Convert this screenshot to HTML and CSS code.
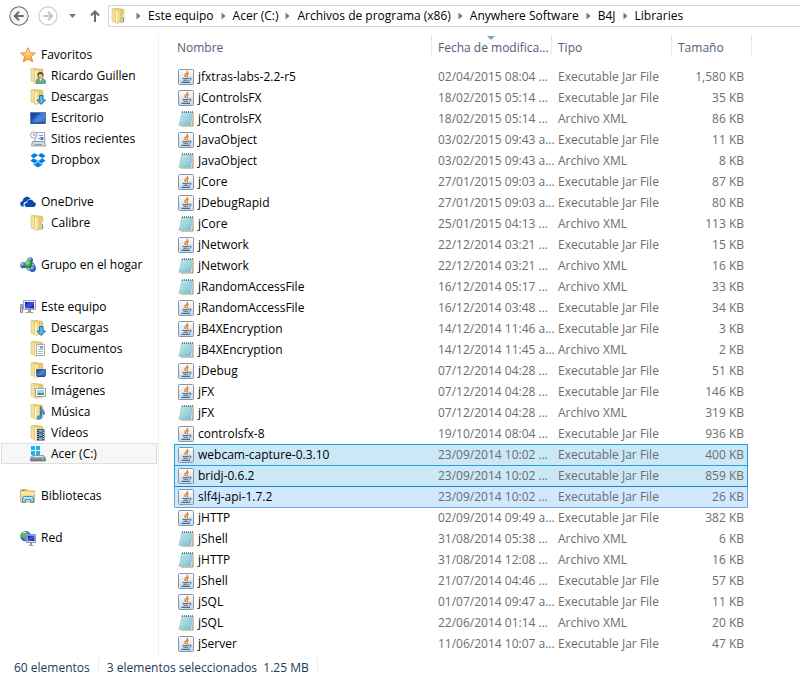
FILE: index.html
```html
<!DOCTYPE html>
<html lang="es">
<head>
<meta charset="utf-8">
<title>Libraries</title>
<link rel="stylesheet" href="styles.css">
</head>
<body>
<svg class="sprite" width="0" height="0" aria-hidden="true">
  <defs>
    <linearGradient id="g-folder" x1="0" x2="1" y1="0" y2="0"><stop offset="0" stop-color="#faefc0"/><stop offset="1" stop-color="#ecd27c"/></linearGradient>
    <linearGradient id="g-star" x1="0" x2="0" y1="0" y2="1"><stop offset="0" stop-color="#fff3a0"/><stop offset="1" stop-color="#ff9a2e"/></linearGradient>
    <linearGradient id="g-screen" x1="0" x2="1" y1="0" y2="1"><stop offset="0" stop-color="#123f98"/><stop offset=".6" stop-color="#4a8ae0"/><stop offset="1" stop-color="#2560b8"/></linearGradient>
    <linearGradient id="g-monitor" x1="0" x2="1" y1="0" y2="1"><stop offset="0" stop-color="#0716a8"/><stop offset=".5" stop-color="#4058e8"/><stop offset="1" stop-color="#0618a0"/></linearGradient>
    <linearGradient id="g-jar" x1="0" x2="0" y1="0" y2="1"><stop offset="0" stop-color="#fdfdfe"/><stop offset="1" stop-color="#cbd6e1"/></linearGradient>
    <linearGradient id="g-note" x1="0" x2="1" y1="0" y2="1"><stop offset="0" stop-color="#c9edf1"/><stop offset="1" stop-color="#76b9ca"/></linearGradient>
    <radialGradient id="g-blue" cx=".35" cy=".3"><stop offset="0" stop-color="#b9d4ff"/><stop offset="1" stop-color="#3358b0"/></radialGradient>
    <radialGradient id="g-green" cx=".35" cy=".3"><stop offset="0" stop-color="#a6f090"/><stop offset="1" stop-color="#249030"/></radialGradient>
    <linearGradient id="g-drive" x1="0" x2="0" y1="0" y2="1"><stop offset="0" stop-color="#c3cbd0"/><stop offset="1" stop-color="#5d6a74"/></linearGradient>
  </defs>
  <symbol id="folder" viewBox="0 0 16 16">
    <path d="M1 1 2 .3h5.500L8 1h4l1 1v11.500l-1 1H5L1 13z" fill="#e6ca74" stroke="#d3b45a" stroke-width=".5"/>
    <path d="M1.300 1.300H4V14l-2.700-1.200z" fill="#f3e09c"/>
    <path d="M4.500 2.500 9.500 1v13L6 15.700l-1.500-1z" fill="url(#g-folder)" stroke="#d9bb62" stroke-width=".5"/>
    <path d="M5.500 3.200v11" stroke="#fffbe6" stroke-width=".8"/>
  </symbol>
  <symbol id="folder-plain" viewBox="0 0 16 16">
    <use href="#folder"/><path d="M12.500 9v5" stroke="#5aa9dc"/><path d="M12.500 6v3" stroke="#f5fbff"/>
  </symbol>
  <symbol id="star" viewBox="0 0 16 16">
    <path d="m8 .7 2.100 5 5.300.4-4.100 3.400 1.400 5.400L8 12l-4.700 2.900 1.300-5.400L.6 6.100l5.300-.4z" fill="url(#g-star)" stroke="#e8933e"/>
  </symbol>
  <symbol id="user" viewBox="0 0 16 16">
    <use href="#folder"/><path d="M6 15.500V13q0-2.500 4.500-2.500T15.500 13v2.500z" fill="#5fb287" stroke="#3e8262" stroke-width=".6"/>
    <circle cx="10.500" cy="7" r="3.100" fill="#5d4a38"/><path d="M8.300 7q2.300-2 4.500 0 0 3.500-2.200 3.800Q8.500 10 8.300 7z" fill="#eebd8d"/><path d="m9.500 11 1.100 2 1.300-2z" fill="#fff"/>
  </symbol>
  <symbol id="download" viewBox="0 0 16 16">
    <use href="#folder"/><path d="M9.500 6.500h3.500V11h2.500l-4.200 4.500L7 11h2.500z" fill="#4cb8ee" stroke="#1e6dae"/>
  </symbol>
  <symbol id="desktop" viewBox="0 0 16 16">
    <path d="M.5 2.500h15v11H.5z" fill="url(#g-screen)" stroke="#5d7fae"/><path d="M1 13h14" stroke="#16396f"/><path d="M1 3v9l9-9z" fill="#0a3a94" opacity=".5"/>
  </symbol>
  <symbol id="recent" viewBox="0 0 16 16">
    <path d="M5.500 1.500h9l.5 9H5z" fill="#f7f9fb" stroke="#98a4af"/><path d="M9 4.500h4M8 7.500h2.500" stroke="#8a9aaa"/><path d="M10.500 6h3v3h-3z" fill="#2f86dd"/>
    <path d="M2.500 10.500h12l1 4.500h-14z" fill="#d5dade" stroke="#929da7"/><path d="M5 13.500h7" stroke="#8a959e"/>
    <circle cx="3.700" cy="4" r="3.200" fill="#fff" stroke="#9aa5ae"/><path d="M3.700 2v2.300h1.800" fill="none" stroke="#66717b" stroke-width=".8"/>
  </symbol>
  <symbol id="dropbox" viewBox="0 0 16 16">
    <path d="M4.700 1 .5 3.800l3 2.400L8 3.600zm6.600 0 4.200 2.800-3 2.400L8 3.600zM.5 8.700l4.200 2.800L8 8.900 3.500 6.200zm15 0-4.200 2.800L8 8.900l4.500-2.700zM4.700 12.400 8 9.700l3.300 2.700 1.200-.8v1.200L8 15.500l-4.500-2.700v-1.200z" fill="#007ee5"/>
  </symbol>
  <symbol id="onedrive" viewBox="0 0 16 16">
    <path d="M2 12.500q-2-1-1.800-3Q.6 7.400 2.600 7q.2-3 2.900-3.900 3.300-1 5.100 1.600-2.600.2-3.800 2.800-3.300.3-3.300 3.200 0 1 .6 1.800z" fill="#094ab2"/>
    <path d="M6.500 13q-2-.4-2-2.200 0-2 2.600-2.300.6-3 3.400-3 2.400 0 3.200 2.500 2.300.3 2.200 2.600-.1 2-2 2.400z" fill="#094ab2"/>
  </symbol>
  <symbol id="homegroup" viewBox="0 0 16 16">
    <circle cx="10" cy="3.200" r="3" fill="url(#g-blue)"/><circle cx="3" cy="8" r="2.900" fill="url(#g-blue)"/><circle cx="12.500" cy="11.500" r="3.400" fill="url(#g-blue)"/><circle cx="8.500" cy="7.300" r="4" fill="url(#g-green)"/><path d="M2 11q4-2 7 3M11 6q3-1 4 3" fill="none" stroke="#3359a8"/>
  </symbol>
  <symbol id="pc" viewBox="0 0 16 16">
    <path d="M.5 5.500h2v8h-2z" fill="#cfd3d8" stroke="#858d96"/><path d="M1 8.500h1" stroke="#3fb64a"/>
    <path d="M3.500 1.500h12v9h-12z" fill="#e6e8eb" stroke="#a1a7ae"/><path d="M5 3h9v6.500H5z" fill="url(#g-monitor)"/><path d="M8 11h3v2H8z" fill="#8e959d"/><path d="M5.500 13.500h8" stroke="#9ba2a9"/>
  </symbol>
  <symbol id="documents" viewBox="0 0 16 16">
    <use href="#folder"/><path d="M6.500 3.500h8v11h-8z" fill="#fff" stroke="#a4acb4"/><path d="M8 5.500h1.500M8 8.500h5M8 10.500h5M8 12.500h5" stroke="#a8b8c8"/><path d="M10 5h3v2.500h-3z" fill="#5aa3dc"/>
  </symbol>
  <symbol id="folder-desktop" viewBox="0 0 16 16">
    <use href="#folder"/><path d="M6.500 7.500h9v6h-9z" fill="url(#g-screen)" stroke="#4a5f86"/><path d="M7 14.500h8" stroke="#2c4470"/>
  </symbol>
  <symbol id="pictures" viewBox="0 0 16 16">
    <use href="#folder"/><path d="M5.500 5.500h10v8h-10z" fill="#fff" stroke="#9aa4ad"/><path d="M7 7h7v5H7z" fill="#9bd0f0"/><path d="m7 12 2-2.500 2 1 3-1V12z" fill="#4e8a78"/>
  </symbol>
  <symbol id="music" viewBox="0 0 16 16">
    <use href="#folder"/><path d="M10.500 2.500q.5 2 2.500 3.500 2.500 2 .8 5 0-2.500-2.300-3.500v5.500q-.2 2.300-2.500 2.300-2 0-2-1.600 0-1.900 3.500-2z" fill="#46a6e6" stroke="#1c68b0" stroke-width=".8"/>
  </symbol>
  <symbol id="videos" viewBox="0 0 16 16">
    <use href="#folder"/><path d="M7 4h7.500v11.500H7z" fill="#343a42"/><path d="M9 4.500h3.500v3H9zm0 4h3.500v2.500H9zm0 3.500h3.500v3H9z" fill="#65aee0"/><path d="M8 5v10M13.500 5v10" stroke="#e5e9ed" stroke-dasharray="1 1"/>
  </symbol>
  <symbol id="drive" viewBox="0 0 16 16">
    <path d="M1 0h4v4H1zm5 0h4v4H6zM1 5h4v4H1zm5 0h4v4H6z" fill="#16b8f0"/><path d="M2.500 9.500h11L15.500 12v3H.5v-3z" fill="url(#g-drive)" stroke="#707c85" stroke-width=".7"/><path d="M3 10.500h10" stroke="#e0e5e8"/><path d="M12 13.500h2" stroke="#49e04d"/>
  </symbol>
  <symbol id="libraries" viewBox="0 0 16 16">
    <path d="M.5 2.500 2 1.500h5l1 1.500h6.500v11H.5z" fill="#f3dd8d" stroke="#d6b85e"/><path d="M1.500 2.500h4" stroke="#63b75d"/><path d="M1 5.500h14" stroke="#fff5c9"/>
    <path d="M2.500 14.500v-4q0-2 2-2h7q2 0 2 2v4h-3v-3h-5v3z" fill="#8fd0ef" stroke="#3d94c7"/><path d="M4 10h8" stroke="#e3f7ff"/>
  </symbol>
  <symbol id="network" viewBox="0 0 16 16">
    <circle cx="5.500" cy="6" r="5.300" fill="url(#g-blue)"/><path d="M2 3q3-3 5-1L5 5 2 7.500.5 6zm2 4 3 1-2 3z" fill="#53c14b"/><path d="M3 2.500h3" stroke="#d9ffd3"/>
    <path d="M6.500 4.500h9v8h-9z" fill="#dfe3e8" stroke="#8e98a5"/><path d="M7.500 5.500h7V11h-7z" fill="url(#g-monitor)"/><path d="M10 13h2v2h-2z" fill="#89929b"/><path d="M8.500 15.500h5" stroke="#9fa7af"/>
  </symbol>
  <symbol id="jar" viewBox="0 0 16 16">
    <rect x=".5" y=".5" width="15" height="15" rx="1" fill="url(#g-jar)" stroke="#8197ad"/>
    <path d="M9.300 2q.8 1.500-1.300 2.700Q5.800 6 7.800 8M10.700 4.500Q8.200 5.500 9.200 6.700q.6.900-.5 1.500" fill="none" stroke="#ea8124" stroke-width="1.300"/>
    <path d="M4.500 9.300q3 .8 6.500 0M5.200 11.300h5M3.500 13.400h8.500" fill="none" stroke="#45698c" stroke-width="1.100"/><path d="M11.300 9q2.800-.2 1.500 1.500-.8.800-1.700.9" fill="none" stroke="#45698c"/>
  </symbol>
  <symbol id="note" viewBox="0 0 16 16">
    <path d="M13.500 1.500H15.500v14H3v-1.200h10z" fill="#a38e66"/><path d="M4 1.500h10.700l-.4 13H3z" fill="#f5f6f3"/><path d="M3.500 1.500h10.700L12.800 14.300H.7Q2.700 10 3.500 1.500z" fill="url(#g-note)" stroke="#7db6c4" stroke-width=".5"/>
    <path d="M4 5h9M3.500 7.500h9M3 10h9" stroke="#a9dbe4" stroke-width=".7"/><path d="M4 1h11" stroke="#4e6470" stroke-width="1.500" stroke-dasharray="1 1"/>
  </symbol>
  <symbol id="sep" viewBox="0 0 5 8"><path d="M.5.500 4.500 4 .5 7.500z" fill="#777"/></symbol>
</svg>

<header class="toolbar">
  <div class="history">
    <button class="nav back" aria-label="Atrás"><svg width="20" height="20" viewBox="0 0 19 19"><circle cx="9.500" cy="9.500" r="8.700"/><path d="M14 9.500H5.500m4-4-4 4 4 4" stroke-width="2"/></svg></button>
    <button class="nav forward" aria-label="Adelante"><svg width="20" height="20" viewBox="0 0 19 19"><circle cx="9.500" cy="9.500" r="8.700"/><path d="M5 9.500h8.500m-4-4 4 4-4 4" stroke-width="2"/></svg></button>
    <button class="nav recent" aria-label="Ubicaciones recientes"><svg width="7" height="4" viewBox="0 0 7 4"><path d="M0 0h7L3.500 4z"/></svg></button>
    <button class="nav up" aria-label="Subir"><svg width="10" height="12" viewBox="0 0 10 12"><path d="M5 12V1.500M1 5.500l4-4 4 4" stroke-width="2"/></svg></button>
  </div>
  <nav class="address" aria-label="Ruta">
    <svg class="icon"><use href="#folder-plain"/></svg>
    <ol class="crumbs">
      <li><svg><use href="#sep"/></svg><a href="#">Este equipo</a></li>
      <li><svg><use href="#sep"/></svg><a href="#">Acer (C:)</a></li>
      <li><svg><use href="#sep"/></svg><a href="#">Archivos de programa (x86)</a></li>
      <li><svg><use href="#sep"/></svg><a href="#">Anywhere Software</a></li>
      <li><svg><use href="#sep"/></svg><a href="#">B4J</a></li>
      <li><svg><use href="#sep"/></svg><a href="#">Libraries</a></li>
    </ol>
  </nav>
</header>

<div class="body">
  <nav class="tree" aria-label="Panel de navegación">
    <ul>
      <li><a href="#"><svg class="icon"><use href="#star"/></svg>Favoritos</a></li>
      <li class="child"><a href="#"><svg class="icon"><use href="#user"/></svg>Ricardo Guillen</a></li>
      <li class="child"><a href="#"><svg class="icon"><use href="#download"/></svg>Descargas</a></li>
      <li class="child"><a href="#"><svg class="icon"><use href="#desktop"/></svg>Escritorio</a></li>
      <li class="child"><a href="#"><svg class="icon"><use href="#recent"/></svg>Sitios recientes</a></li>
      <li class="child"><a href="#"><svg class="icon"><use href="#dropbox"/></svg>Dropbox</a></li>
    </ul>
    <ul>
      <li><a href="#"><svg class="icon"><use href="#onedrive"/></svg>OneDrive</a></li>
      <li class="child"><a href="#"><svg class="icon"><use href="#folder-plain"/></svg>Calibre</a></li>
    </ul>
    <ul>
      <li><a href="#"><svg class="icon"><use href="#homegroup"/></svg>Grupo en el hogar</a></li>
    </ul>
    <ul>
      <li><a href="#"><svg class="icon"><use href="#pc"/></svg>Este equipo</a></li>
      <li class="child"><a href="#"><svg class="icon"><use href="#download"/></svg>Descargas</a></li>
      <li class="child"><a href="#"><svg class="icon"><use href="#documents"/></svg>Documentos</a></li>
      <li class="child"><a href="#"><svg class="icon"><use href="#folder-desktop"/></svg>Escritorio</a></li>
      <li class="child"><a href="#"><svg class="icon"><use href="#pictures"/></svg>Imágenes</a></li>
      <li class="child"><a href="#"><svg class="icon"><use href="#music"/></svg>Música</a></li>
      <li class="child"><a href="#"><svg class="icon"><use href="#videos"/></svg>Vídeos</a></li>
      <li class="child"><a href="#" class="current"><svg class="icon"><use href="#drive"/></svg>Acer (C:)</a></li>
    </ul>
    <ul>
      <li><a href="#"><svg class="icon"><use href="#libraries"/></svg>Bibliotecas</a></li>
    </ul>
    <ul>
      <li><a href="#"><svg class="icon"><use href="#network"/></svg>Red</a></li>
    </ul>
  </nav>

  <main class="files">
    <table>
      <colgroup><col class="c-name"><col class="c-date"><col class="c-type"><col class="c-size"></colgroup>
      <thead><tr><th>Nombre</th><th class="sorted" aria-sort="descending">Fecha de modifica...</th><th>Tipo</th><th>Tamaño</th></tr></thead>
      <tbody>
        <tr><td><svg class="icon"><use href="#jar"/></svg>jfxtras-labs-2.2-r5</td><td>02/04/2015 08:04 ...</td><td>Executable Jar File</td><td>1,580 KB</td></tr>
        <tr><td><svg class="icon"><use href="#jar"/></svg>jControlsFX</td><td>18/02/2015 05:14 ...</td><td>Executable Jar File</td><td>35 KB</td></tr>
        <tr><td><svg class="icon"><use href="#note"/></svg>jControlsFX</td><td>18/02/2015 05:14 ...</td><td>Archivo XML</td><td>86 KB</td></tr>
        <tr><td><svg class="icon"><use href="#jar"/></svg>JavaObject</td><td>03/02/2015 09:43 a...</td><td>Executable Jar File</td><td>11 KB</td></tr>
        <tr><td><svg class="icon"><use href="#note"/></svg>JavaObject</td><td>03/02/2015 09:43 a...</td><td>Archivo XML</td><td>8 KB</td></tr>
        <tr><td><svg class="icon"><use href="#jar"/></svg>jCore</td><td>27/01/2015 09:03 a...</td><td>Executable Jar File</td><td>87 KB</td></tr>
        <tr><td><svg class="icon"><use href="#jar"/></svg>jDebugRapid</td><td>27/01/2015 09:03 a...</td><td>Executable Jar File</td><td>80 KB</td></tr>
        <tr><td><svg class="icon"><use href="#note"/></svg>jCore</td><td>25/01/2015 04:13 ...</td><td>Archivo XML</td><td>113 KB</td></tr>
        <tr><td><svg class="icon"><use href="#jar"/></svg>jNetwork</td><td>22/12/2014 03:21 ...</td><td>Executable Jar File</td><td>15 KB</td></tr>
        <tr><td><svg class="icon"><use href="#note"/></svg>jNetwork</td><td>22/12/2014 03:21 ...</td><td>Archivo XML</td><td>16 KB</td></tr>
        <tr><td><svg class="icon"><use href="#note"/></svg>jRandomAccessFile</td><td>16/12/2014 05:17 ...</td><td>Archivo XML</td><td>33 KB</td></tr>
        <tr><td><svg class="icon"><use href="#jar"/></svg>jRandomAccessFile</td><td>16/12/2014 03:48 ...</td><td>Executable Jar File</td><td>34 KB</td></tr>
        <tr><td><svg class="icon"><use href="#jar"/></svg>jB4XEncryption</td><td>14/12/2014 11:46 a...</td><td>Executable Jar File</td><td>3 KB</td></tr>
        <tr><td><svg class="icon"><use href="#note"/></svg>jB4XEncryption</td><td>14/12/2014 11:45 a...</td><td>Archivo XML</td><td>2 KB</td></tr>
        <tr><td><svg class="icon"><use href="#jar"/></svg>jDebug</td><td>07/12/2014 04:28 ...</td><td>Executable Jar File</td><td>51 KB</td></tr>
        <tr><td><svg class="icon"><use href="#jar"/></svg>jFX</td><td>07/12/2014 04:28 ...</td><td>Executable Jar File</td><td>146 KB</td></tr>
        <tr><td><svg class="icon"><use href="#note"/></svg>jFX</td><td>07/12/2014 04:28 ...</td><td>Archivo XML</td><td>319 KB</td></tr>
        <tr><td><svg class="icon"><use href="#jar"/></svg>controlsfx-8</td><td>19/10/2014 08:04 ...</td><td>Executable Jar File</td><td>936 KB</td></tr>
        <tr class="selected"><td><svg class="icon"><use href="#jar"/></svg>webcam-capture-0.3.10</td><td>23/09/2014 10:02 ...</td><td>Executable Jar File</td><td>400 KB</td></tr>
        <tr class="selected"><td><svg class="icon"><use href="#jar"/></svg>bridj-0.6.2</td><td>23/09/2014 10:02 ...</td><td>Executable Jar File</td><td>859 KB</td></tr>
        <tr class="selected focused"><td><svg class="icon"><use href="#jar"/></svg>slf4j-api-1.7.2</td><td>23/09/2014 10:02 ...</td><td>Executable Jar File</td><td>26 KB</td></tr>
        <tr><td><svg class="icon"><use href="#jar"/></svg>jHTTP</td><td>02/09/2014 09:49 a...</td><td>Executable Jar File</td><td>382 KB</td></tr>
        <tr><td><svg class="icon"><use href="#note"/></svg>jShell</td><td>31/08/2014 05:38 ...</td><td>Archivo XML</td><td>6 KB</td></tr>
        <tr><td><svg class="icon"><use href="#note"/></svg>jHTTP</td><td>31/08/2014 12:08 ...</td><td>Archivo XML</td><td>16 KB</td></tr>
        <tr><td><svg class="icon"><use href="#jar"/></svg>jShell</td><td>21/07/2014 04:46 ...</td><td>Executable Jar File</td><td>57 KB</td></tr>
        <tr><td><svg class="icon"><use href="#jar"/></svg>jSQL</td><td>01/07/2014 09:47 a...</td><td>Executable Jar File</td><td>11 KB</td></tr>
        <tr><td><svg class="icon"><use href="#note"/></svg>jSQL</td><td>22/06/2014 01:14 ...</td><td>Archivo XML</td><td>20 KB</td></tr>
        <tr><td><svg class="icon"><use href="#jar"/></svg>jServer</td><td>11/06/2014 10:07 a...</td><td>Executable Jar File</td><td>47 KB</td></tr>
      </tbody>
    </table>
  </main>
</div>

<footer class="status">
  <span>60 elementos</span>
  <span>3 elementos seleccionados&nbsp; 1.25 MB</span>
</footer>
</body>
</html>
```
FILE: styles.css
```css
* { box-sizing: border-box; }

body {
  margin: 0;
  background: #fff;
  color: #000;
  font: 12px/20px "Open Sans", "Noto Sans", sans-serif;
  white-space: nowrap;
  overflow: hidden;
}

a { color: inherit; text-decoration: none; }
ul, ol { list-style: none; margin: 0; padding: 0; }
.sprite { position: absolute; }
.icon { width: 16px; height: 16px; flex: none; }

/* Toolbar */
.toolbar { display: flex; align-items: flex-start; padding-top: 5px; height: 35px; }
.history { display: flex; align-items: center; width: 108px; height: 22px; padding-left: 9px; gap: 9px; }
.nav { display: flex; padding: 0; border: 0; background: none; fill: none; stroke: #6b6b6b; }
.nav.back circle { fill: #f7f7f7; }
.nav.forward { stroke: #c6c6c6; }
.nav.recent { fill: #777; stroke: none; margin-left: 2px; }
.nav.up { margin-left: 5px; }
.address { display: flex; flex: 1; align-items: center; height: 22px; padding-left: 2px; border: 1px solid #d9d9d9; border-right: 0; }
.crumbs { display: flex; margin-left: 2px; }
.crumbs li { display: flex; align-items: center; }
.crumbs svg { width: 5px; height: 8px; margin: 0 7px; }

/* Main area */
.body { display: flex; }
.tree { flex: none; width: 159px; padding-top: 9px; border-right: 1px solid #f0f0f0; }
.tree ul { margin-bottom: 21px; }
.tree a { display: flex; align-items: center; gap: 5px; height: 21px; margin: 0 1px; padding-left: 18px; border: 1px solid transparent; }
.tree .child a { padding-left: 28px; }
.tree .current { background: #f7f7f7; border-color: #dedede; }

.files { flex: 1; padding: 0 0 2px 15px; }
table { table-layout: fixed; width: 574px; border-spacing: 0; }
.c-name { width: 257px; }
.c-date, .c-type { width: 120px; }
th, td { height: 21px; padding: 0 0 0 7px; text-align: left; font-weight: 400; }
th { position: relative; height: 31px; padding-bottom: 6px; color: #4c607a; }
th:first-child { padding-left: 3px; }
th:not(:first-child)::before, th:last-child::after {
  content: "";
  position: absolute;
  left: 0;
  top: 0;
  width: 1px;
  height: 20px;
  background: linear-gradient(#dde6ef, #e9eff5);
}
th:last-child::after { left: auto; right: -4px; }
.sorted::after {
  content: "";
  position: absolute;
  left: 56px;
  top: 1px;
  border: solid transparent;
  border-width: 4px 4px 0;
  border-top-color: #64b2d6;
}
td { border-top: 1px solid transparent; color: #6d6d6d; }
td:first-child { display: flex; align-items: center; gap: 4px; padding-left: 3px; border-left: 1px solid transparent; color: #000; }
td:last-child { padding-right: 3px; border-right: 1px solid transparent; text-align: right; }
.selected td { background: #cbe8f6; border-color: #26a0da; }
.focused td { background: #d1e8ff; border-color: #66a7e8; border-top-color: #1883d7; }
.focused + tr td { border-top-color: #66a7e8; }

/* Status bar */
.status { display: flex; padding: 2px 0 0 14px; color: #1e395b; }
.status span { padding-right: 8px; border-right: 1px solid #eee; margin-right: 8px; }
```
